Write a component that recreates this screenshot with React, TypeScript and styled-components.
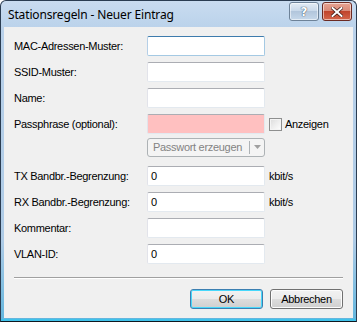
import styled, { createGlobalStyle } from "styled-components";

const GlobalStyle = createGlobalStyle`
  html, body { margin: 0; padding: 0; background: #ffffff; }
  body { width: 357px; height: 322px; overflow: hidden; }
  * { box-sizing: border-box; }
`;

const Window = styled.div`
  width: 357px;
  height: 322px;
  display: flex;
  flex-direction: column;
  border: 1px solid #2b3d52;
  border-bottom-color: #101820;
  border-radius: 6px 6px 0 0;
  padding: 0 3px 3px 3px;
  background: linear-gradient(#c9dcf0 0px, #b9d1ea 30px, #aecbe6 240px, #62b6de 100%);
  box-shadow: inset 0 -2px 0 #3fc2ea;
`;

const TitleBar = styled.div`
  height: 26px;
  display: flex;
  align-items: flex-start;
`;

const Title = styled.span`
  font-family: "Noto Sans", "Open Sans", sans-serif;
  font-size: 12px;
  color: #000;
  margin: 5px 0 0 4px;
  letter-spacing: -0.15px;
`;

const CaptionButtons = styled.div`
  margin: 1px 1px 0 auto;
  display: flex;
  gap: 3px;
`;

const CaptionButton = styled.div<{ $variant: "help" | "close" }>`
  width: 30px;
  height: 19px;
  display: flex;
  align-items: center;
  justify-content: center;
  border: 1px solid ${(p) => (p.$variant === "close" ? "#6b2a22" : "#6d8298")};
  border-radius: 3px;
  box-shadow: inset 0 0 0 1px rgba(255, 255, 255, 0.55);
  background: ${(p) =>
    p.$variant === "close"
      ? "linear-gradient(#e8a493 0%, #d98a78 45%, #c0442c 50%, #d4654a 100%)"
      : "linear-gradient(#e3ecf6 0%, #c9d9ea 45%, #b2c6dc 50%, #c6d8ea 100%)"};
  font-family: "DejaVu Sans", sans-serif;
  font-weight: bold;
  font-size: 12px;
  color: #ffffff;
  text-shadow: 0 0 1px #34485e, 0 0 1px #34485e;
`;

const Client = styled.div`
  flex: 1;
  background: #f0f0f0;
  padding: 9px 10px 0 10px;
  display: flex;
  flex-direction: column;
  font-family: "Liberation Sans", Arial, sans-serif;
  font-size: 11px;
  letter-spacing: -0.3px;
  color: #000;
`;

const Form = styled.div`
  display: flex;
  flex-direction: column;
  gap: 6px;
`;

const Row = styled.div<{ $offset?: number }>`
  display: flex;
  align-items: center;
  height: 20px;
  margin-top: ${(p) => p.$offset ?? 0}px;
`;

const Label = styled.span`
  width: 133px;
  flex: none;
`;

const TextBox = styled.div<{ $focused?: boolean; $error?: boolean }>`
  width: 118px;
  height: 20px;
  flex: none;
  border: 1px solid ${(p) => (p.$focused ? "#a4c9e3" : "#e3e9ef")};
  border-top-color: ${(p) => (p.$focused ? "#3d7bad" : "#abadb3")};
  border-left-color: ${(p) => (p.$focused ? "#b5cfe7" : "#e2e3ea")};
  border-radius: 2px;
  background: ${(p) => (p.$error ? "#ffc0c0" : "#ffffff")};
  padding: 2px 0 0 3px;
  line-height: 14px;
`;

const Unit = styled.span`
  margin-left: 4px;
`;

const CheckBox = styled.span`
  width: 13px;
  height: 13px;
  margin-left: 4px;
  border: 1px solid #8e8f8f;
  background: linear-gradient(135deg, #dcdcdc, #ffffff);
  box-shadow: inset 0 0 0 1px #f4f4f4;
`;

const CheckLabel = styled.span`
  margin-left: 3px;
`;

const SplitButton = styled.div`
  margin-left: 133px;
  width: 118px;
  height: 19px;
  display: flex;
  align-items: stretch;
  border: 1px solid #adb2b5;
  border-radius: 3px;
  background: #f4f4f4;
  color: #838383;
`;

const SplitMain = styled.span`
  flex: 1;
  display: flex;
  align-items: center;
  padding-left: 5px;
  border-right: 1px solid #adb2b5;
  margin: 2px 0;
`;

const SplitArrow = styled.span`
  width: 14px;
  display: flex;
  align-items: center;
  justify-content: center;
`;

const Separator = styled.div`
  margin: 13px 0 0 0;
  height: 1px;
  background: #a0a0a0;
  box-shadow: 0 1px 0 #ffffff;
`;

const ButtonBar = styled.div`
  display: flex;
  justify-content: flex-end;
  gap: 7px;
  margin-top: 11px;
`;

const PushButton = styled.button<{ $default?: boolean }>`
  width: 73px;
  height: 20px;
  font-family: "Liberation Sans", Arial, sans-serif;
  font-size: 11px;
  letter-spacing: -0.3px;
  color: #000;
  padding: 0;
  border: 1px solid ${(p) => (p.$default ? "#3c7fb1" : "#707070")};
  border-radius: 3px;
  background: linear-gradient(#f2f2f2 0%, #ebebeb 49%, #dddddd 50%, #cfcfcf 100%);
  box-shadow: inset 0 0 0 1px ${(p) => (p.$default ? "#48d8fb" : "#fcfcfc")};
`;

export default function App() {
  return (
    <>
      <GlobalStyle />
      <Window>
        <TitleBar>
          <Title>Stationsregeln - Neuer Eintrag</Title>
          <CaptionButtons>
            <CaptionButton $variant="help">?</CaptionButton>
            <CaptionButton $variant="close">
              <svg width="12" height="10" viewBox="0 0 12 10">
                <path d="M1.5 1 L10.5 9 M10.5 1 L1.5 9" stroke="#3a1510" strokeWidth="3.4" strokeLinecap="square" />
                <path d="M1.5 1 L10.5 9 M10.5 1 L1.5 9" stroke="#ffffff" strokeWidth="2" strokeLinecap="square" />
              </svg>
            </CaptionButton>
          </CaptionButtons>
        </TitleBar>
        <Client>
          <Form>
            <Row>
              <Label>MAC-Adressen-Muster:</Label>
              <TextBox $focused />
            </Row>
            <Row>
              <Label>SSID-Muster:</Label>
              <TextBox />
            </Row>
            <Row>
              <Label>Name:</Label>
              <TextBox />
            </Row>
            <Row>
              <Label>Passphrase (optional):</Label>
              <TextBox $error />
              <CheckBox />
              <CheckLabel>Anzeigen</CheckLabel>
            </Row>
            <Row $offset={-3}>
              <SplitButton>
                <SplitMain>Passwort erzeugen</SplitMain>
                <SplitArrow>
                  <svg width="7" height="4" viewBox="0 0 7 4">
                    <path d="M0 0 H7 L3.5 4 Z" fill="#a0a0a0" />
                  </svg>
                </SplitArrow>
              </SplitButton>
            </Row>
            <Row $offset={3}>
              <Label>TX Bandbr.-Begrenzung:</Label>
              <TextBox>0</TextBox>
              <Unit>kbit/s</Unit>
            </Row>
            <Row>
              <Label>RX Bandbr.-Begrenzung:</Label>
              <TextBox>0</TextBox>
              <Unit>kbit/s</Unit>
            </Row>
            <Row>
              <Label>Kommentar:</Label>
              <TextBox />
            </Row>
            <Row>
              <Label>VLAN-ID:</Label>
              <TextBox>0</TextBox>
            </Row>
          </Form>
          <Separator />
          <ButtonBar>
            <PushButton $default>OK</PushButton>
            <PushButton>Abbrechen</PushButton>
          </ButtonBar>
        </Client>
      </Window>
    </>
  );
}
